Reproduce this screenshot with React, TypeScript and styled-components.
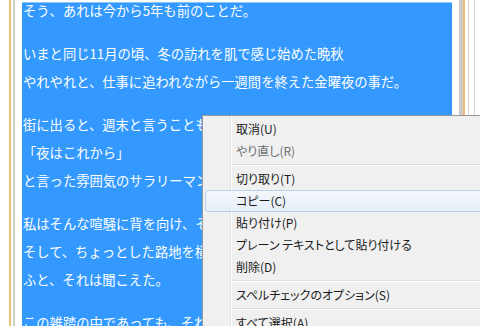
import styled, { createGlobalStyle } from "styled-components";

const GlobalStyle = createGlobalStyle`
  html, body {
    margin: 0;
    padding: 0;
    background: #fff;
    overflow: hidden;
  }
  body {
    width: 480px;
    height: 326px;
    font-family: "Noto Sans CJK JP", "Noto Sans", sans-serif;
  }
`;

const Page = styled.div`
  position: relative;
  display: flex;
  height: 326px;
  overflow: hidden;
  background: #fff;
`;

const Rail = styled.div<{ $w: number; $color: string; $ml?: number }>`
  flex: none;
  width: ${(p) => p.$w}px;
  margin-left: ${(p) => p.$ml ?? 0}px;
  background: ${(p) => p.$color};
`;

const Editor = styled.div`
  flex: none;
  width: 430px;
  margin-top: 2px;
  margin-left: 7px;
  border-top: 1px solid #8ec5fa;
  background: #3399ff;
  overflow: hidden;
`;

const Content = styled.div`
  margin-top: -6px;
  color: #fff;
  font-size: 13.3px;
  line-height: 28px;
  white-space: nowrap;
`;

const Para = styled.p`
  margin: 0 0 15px;
`;

const Line = styled.div`
  padding-left: 1px;
`;

const Menu = styled.ul`
  position: absolute;
  left: 202px;
  top: 115px;
  width: 300px;
  margin: 0;
  padding: 2px;
  list-style: none;
  border: 1px solid #979797;
  background:
    linear-gradient(
      to right,
      transparent 27px,
      #e2e3e3 27px,
      #e2e3e3 28px,
      #fff 28px,
      #fff 29px,
      transparent 29px
    ),
    #f0f0f0;
  font-family: "Noto Sans CJK JP", sans-serif;
  font-size: 12px;
  font-feature-settings: "palt";
`;

const Item = styled.li<{ $active?: boolean; $disabled?: boolean }>`
  box-sizing: border-box;
  height: 22px;
  line-height: 20px;
  padding-left: 30px;
  border: 1px solid ${(p) => (p.$active ? "#b9d1ec" : "transparent")};
  border-radius: 3px;
  background: ${(p) =>
    p.$active ? "linear-gradient(#f4f8fc, #e5edf8)" : "transparent"};
  color: ${(p) => (p.$disabled ? "#6d6d6d" : "#1a1a1a")};
  white-space: nowrap;
`;

const Separator = styled.li`
  height: 6px;
  margin-left: 27px;
  display: flex;
  flex-direction: column;
  justify-content: center;

  &::before {
    content: "";
    height: 1px;
    background: #e0e0e0;
    border-bottom: 1px solid #fff;
  }
`;

const paragraphs = [
  ["そう、あれは今から5年も前のことだ。"],
  [
    "いまと同じ11月の頃、冬の訪れを肌で感じ始めた晩秋",
    "やれやれと、仕事に追われながら一週間を終えた金曜夜の事だ。",
  ],
  [
    "街に出ると、週末と言うこともあってか人で溢れていた。",
    "「夜はこれから」",
    "と言った雰囲気のサラリーマンたちが楽しそうに歩いている。",
  ],
  [
    "私はそんな喧騒に背を向け、そそくさと家路を急いだ。",
    "そして、ちょっとした路地を横切ろうとした時だった。",
    "ふと、それは聞こえた。",
  ],
  ["この雑踏の中であっても、それははっきりと聞こえた。"],
];

type MenuEntry =
  | { label: string; disabled?: boolean; active?: boolean }
  | "sep";

const menu: MenuEntry[] = [
  { label: "取消(U)" },
  { label: "やり直し(R)", disabled: true },
  "sep",
  { label: "切り取り(T)" },
  { label: "コピー(C)", active: true },
  { label: "貼り付け(P)" },
  { label: "プレーン テキストとして貼り付ける" },
  { label: "削除(D)" },
  "sep",
  { label: "スペルチェックのオプション(S)" },
  "sep",
  { label: "すべて選択(A)" },
];

const App = () => {
  return (
    <>
      <GlobalStyle />
      <Page>
        <Rail $ml={9} $w={2} $color="#e9bf74" />
        <Rail $ml={2} $w={2} $color="#cfcfcf" />
        <Editor>
          <Content>
            {paragraphs.map((lines, i) => (
              <Para key={i}>
                {lines.map((l) => (
                  <Line key={l}>{l}</Line>
                ))}
              </Para>
            ))}
          </Content>
        </Editor>
        <Rail $ml={7} $w={4} $color="#cccccc" />
        <Rail $w={2} $color="#e9bf74" />
        <Rail $ml={3} $w={1} $color="#d6d6d6" />
        <Rail $ml={5} $w={1} $color="#d6d6d6" />

        <Menu>
          {menu.map((m, i) =>
            m === "sep" ? (
              <Separator key={i} />
            ) : (
              <Item key={i} $active={m.active} $disabled={m.disabled}>
                {m.label}
              </Item>
            )
          )}
        </Menu>
      </Page>
    </>
  );
};

export default App;
